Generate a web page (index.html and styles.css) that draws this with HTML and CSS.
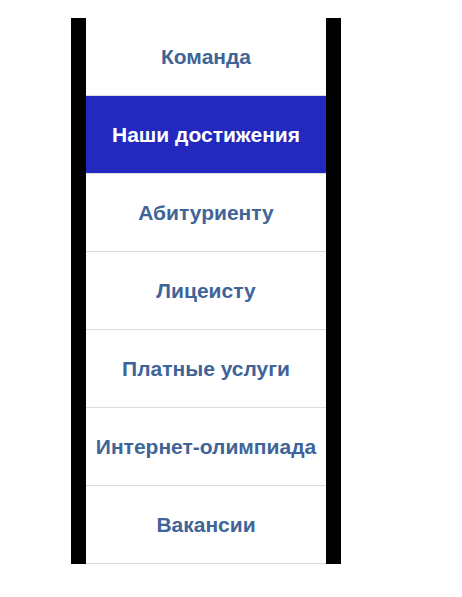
FILE: index.html
```html
<!DOCTYPE html>
<html lang="ru">
<head>
<meta charset="utf-8">
<title>Меню</title>
<link rel="stylesheet" href="styles.css">
</head>
<body>
<nav class="menu">
  <a class="menu-item" href="#">Команда</a>
  <a class="menu-item active" href="#">Наши достижения</a>
  <a class="menu-item" href="#">Абитуриенту</a>
  <a class="menu-item" href="#">Лицеисту</a>
  <a class="menu-item" href="#">Платные услуги</a>
  <a class="menu-item" href="#">Интернет-олимпиада</a>
  <a class="menu-item" href="#">Вакансии</a>
</nav>
</body>
</html>
```

FILE: styles.css
```css
html, body {
  margin: 0;
  padding: 0;
  background: #fff;
}

body {
  padding: 18px 0 0 71px;
  font-family: "Liberation Sans", Arial, sans-serif;
}

.menu {
  display: flex;
  flex-direction: column;
  width: 240px;
  border-left: 15px solid #000;
  border-right: 15px solid #000;
}

.menu-item {
  display: flex;
  align-items: center;
  justify-content: center;
  height: 77px;
  border-bottom: 1px solid #dcdcdc;
  color: #3f6598;
  font-size: 21px;
  font-weight: bold;
  text-decoration: none;
  white-space: nowrap;
}

.menu-item.active {
  background: #2329bf;
  color: #fff;
}
```
